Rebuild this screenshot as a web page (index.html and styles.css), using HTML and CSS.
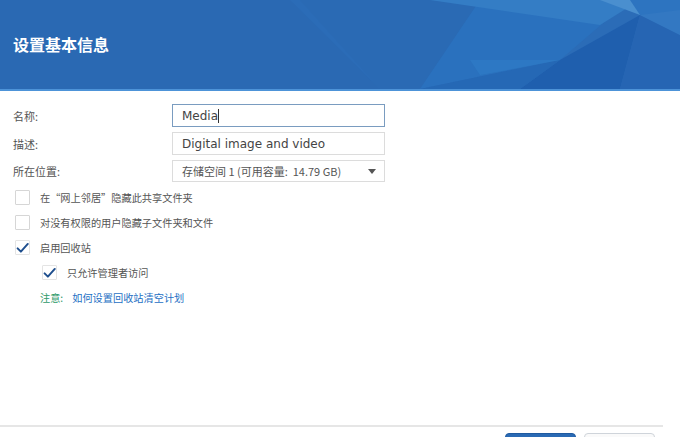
FILE: index.html
```html
<!DOCTYPE html>
<html lang="zh">
<head>
<meta charset="utf-8">
<link rel="stylesheet" href="styles.css">
</head>
<body>
<div class="page">
  <header class="header">
    <svg class="facets" viewBox="0 0 680 89" preserveAspectRatio="none" aria-hidden="true">
      <polygon points="290,0 680,0 680,89 380,89" fill="#2b6cb7"/>
      <polygon points="300,0 480,0 420,89 380,89" fill="#2a6ab4"/>
      <polygon points="480,0 630,0 560,60 420,89" fill="#2a71be"/>
      <polygon points="430,0 640,0 600,25" fill="#347dc5"/>
      <polygon points="600,0 680,0 680,10 640,15" fill="#4a8fcf"/>
      <polygon points="630,0 680,0 680,35 640,15" fill="#2d74c0"/>
      <polygon points="560,60 640,15 620,89 520,89" fill="#1f5fae"/>
      <polygon points="640,15 680,35 680,89 620,89" fill="#2665b3"/>
      <polygon points="640,15 680,10 680,35" fill="#3378c2"/>
      <polygon points="420,89 560,60 520,89" fill="#2568b5"/>
      <polygon points="470,60 560,60 480,75" fill="#2f7cc6" opacity="0.7"/>
    </svg>
    <h1 class="title">设置基本信息</h1>
  </header>
  <main class="content">
    <div class="form">
      <label class="label">名称:</label>
      <div class="field focus">Media<span class="caret"></span></div>
      <label class="label">描述:</label>
      <div class="field">Digital image and video</div>
      <label class="label">所在位置:</label>
      <div class="field select"><span class="select-text">存储空间 1 (可用容量:&nbsp; 14.79 GB)</span><span class="arrow"></span></div>
    </div>
    <div class="checks">
      <div class="check-row"><span class="box"></span><span class="check-text">在“网上邻居”隐藏此共享文件夹</span></div>
      <div class="check-row"><span class="box"></span><span class="check-text">对没有权限的用户隐藏子文件夹和文件</span></div>
      <div class="check-row"><span class="box checked"><svg viewBox="0 0 16 16"><path d="M2 8.5 L6 12.5 L14.5 3" fill="none" stroke="#1f4f8e" stroke-width="2.4" stroke-linecap="round" stroke-linejoin="round"/></svg></span><span class="check-text">启用回收站</span></div>
      <div class="check-row indent"><span class="box checked"><svg viewBox="0 0 16 16"><path d="M2 8.5 L6 12.5 L14.5 3" fill="none" stroke="#1f4f8e" stroke-width="2.4" stroke-linecap="round" stroke-linejoin="round"/></svg></span><span class="check-text">只允许管理者访问</span></div>
      <div class="note"><span class="note-label">注意:</span><a class="note-link">如何设置回收站清空计划</a></div>
    </div>
  </main>
  <footer class="footer">
    <button class="btn primary"></button>
    <button class="btn secondary"></button>
  </footer>
</div>
</body>
</html>
```
FILE: styles.css
```css
html, body {
  margin: 0;
  padding: 0;
  background: #fff;
}
body {
  font-family: "Noto Sans CJK SC", "DejaVu Sans", sans-serif;
  color: #555;
}
.page {
  width: 680px;
  height: 437px;
  display: flex;
  flex-direction: column;
  overflow: hidden;
}
.header {
  position: relative;
  height: 89px;
  background: #2a69b3;
  border-bottom: 2px solid #4d93d8;
  display: flex;
  align-items: center;
  padding-left: 13px;
  flex-shrink: 0;
}
.facets {
  position: absolute;
  inset: 0;
  width: 100%;
  height: 100%;
}
.title {
  position: relative;
  margin: 0 0 2px;
  font-size: 16px;
  font-weight: bold;
  color: #fff;
  line-height: 20px;
}
.content {
  flex: 1;
  padding: 13px 0 0 13px;
}
.form {
  display: grid;
  grid-template-columns: 159px 213px;
  row-gap: 5px;
  align-items: center;
}
.label {
  font-size: 11px;
  color: #555;
}
.field {
  box-sizing: border-box;
  height: 23px;
  border: 1px solid #dcdcdc;
  padding: 0 9px;
  font-family: "DejaVu Sans", sans-serif;
  font-size: 12px;
  color: #444;
  display: flex;
  align-items: center;
}
.field.focus {
  border-color: #7a9cc0;
}
.caret {
  display: inline-block;
  width: 1px;
  height: 14px;
  background: #333;
}
.select {
  justify-content: space-between;
  height: 22px;
  padding-right: 8px;
}
.select-text {
  font-family: "Noto Sans CJK SC", "DejaVu Sans", sans-serif;
  font-size: 11px;
  color: #555;
}
.arrow {
  width: 0;
  height: 0;
  border-left: 4px solid transparent;
  border-right: 4px solid transparent;
  border-top: 5px solid #555;
}
.checks {
  margin-top: 3px;
  display: flex;
  flex-direction: column;
}
.check-row {
  height: 25px;
  display: flex;
  align-items: center;
  padding-left: 2px;
}
.check-row.indent {
  padding-left: 29px;
}
.box {
  box-sizing: border-box;
  width: 15px;
  height: 15px;
  border: 1px solid #d6d6d6;
  border-radius: 1px;
  margin-right: 10px;
  display: flex;
  align-items: center;
  justify-content: center;
  flex-shrink: 0;
}
.box.checked {
  border-color: #e4e4e4;
}
.box svg {
  width: 16px;
  height: 16px;
}
.check-text {
  font-size: 10.2px;
  color: #555;
}
.note {
  height: 25px;
  display: flex;
  align-items: center;
  padding-left: 27px;
  font-size: 10.2px;
}
.note-label {
  color: #2f9a6a;
  margin-right: 9px;
}
.note-link {
  color: #1d6fc4;
}
.footer {
  flex-shrink: 0;
  height: 4px;
  margin-right: 17px;
  border-top: 2px solid #e6e6e6;
  display: flex;
  justify-content: flex-end;
  gap: 8px;
  padding-top: 6px;
  padding-right: 8px;
}
.btn {
  width: 71px;
  height: 28px;
  border-radius: 4px;
  padding: 0;
  flex-shrink: 0;
}
.btn.primary {
  background: #2a6ab4;
  border: 1px solid #1f5aa0;
}
.btn.secondary {
  background: #fafafa;
  border: 1px solid #cfd4da;
}
```
